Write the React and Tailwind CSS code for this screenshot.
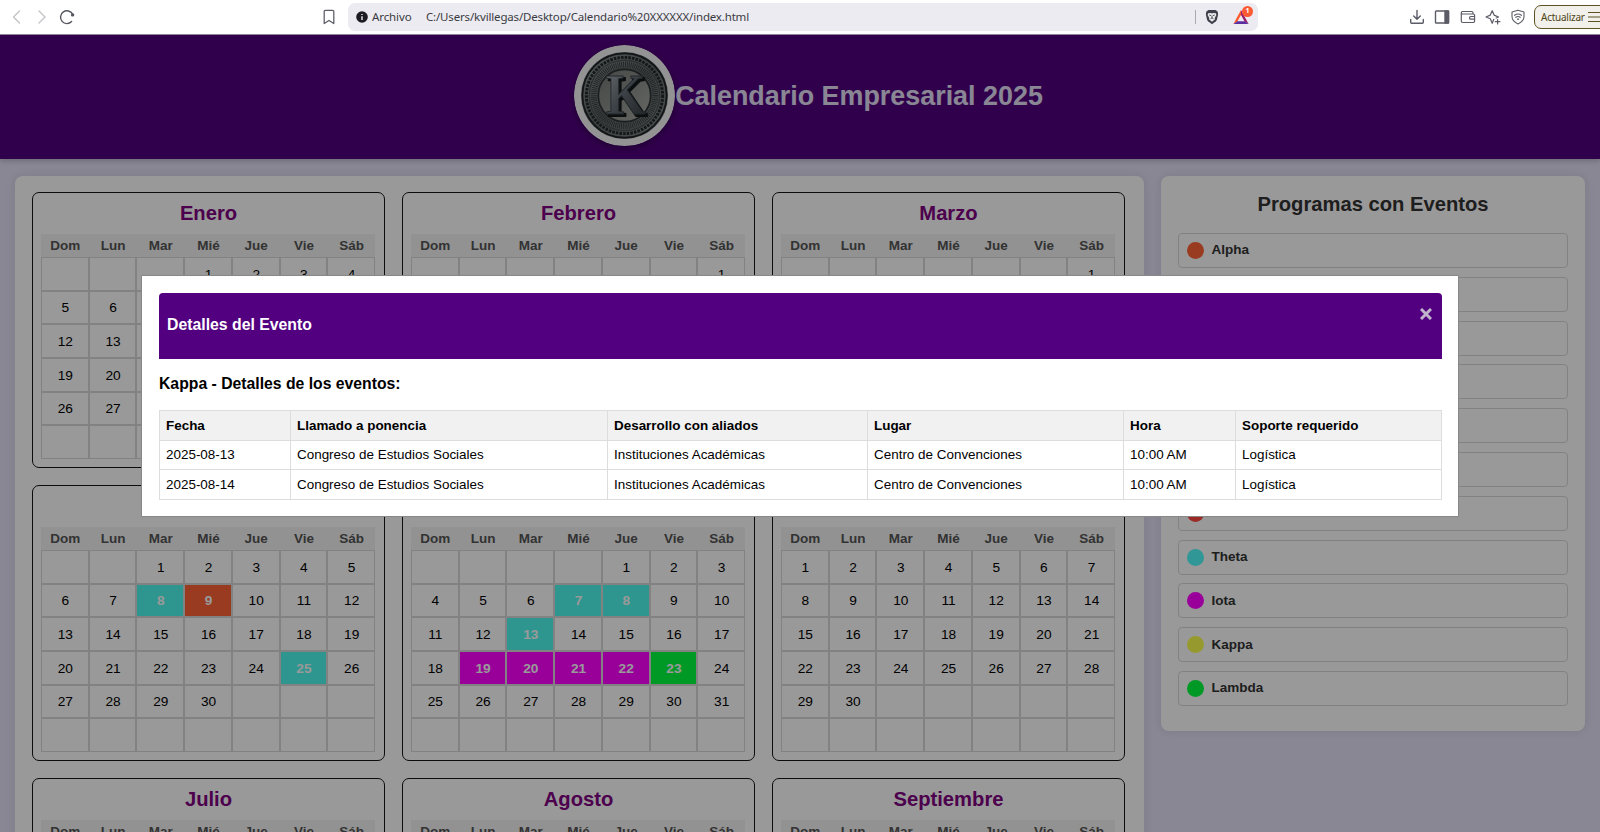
import React from "react";

const DAYS = ["Dom", "Lun", "Mar", "Mié", "Jue", "Vie", "Sáb"];

const TEAL = "bg-[#4dfbee] text-white font-bold";
const ORANGE = "bg-[#ff6338] text-white font-bold";
const MAGENTA = "bg-[#ff00ff] text-white font-bold";
const GREEN = "bg-[#00ff40] text-white font-bold";

const MONTHS = [
  { name: "Enero", start: 3, days: 31, events: {} },
  { name: "Febrero", start: 6, days: 28, events: {} },
  { name: "Marzo", start: 6, days: 31, events: {} },
  { name: "Abril", start: 2, days: 30, events: { 8: TEAL, 9: ORANGE, 25: TEAL } },
  {
    name: "Mayo",
    start: 4,
    days: 31,
    events: { 7: TEAL, 8: TEAL, 13: TEAL, 19: MAGENTA, 20: MAGENTA, 21: MAGENTA, 22: MAGENTA, 23: GREEN },
  },
  { name: "Junio", start: 0, days: 30, events: {} },
  { name: "Julio", start: 2, days: 31, events: {} },
  { name: "Agosto", start: 5, days: 31, events: {} },
  { name: "Septiembre", start: 1, days: 30, events: {} },
];

const PROGRAMS = [
  ["Alpha", "bg-[#ff6338]"],
  ["Beta", "bg-[#3b82f6]"],
  ["Gamma", "bg-[#22c55e]"],
  ["Delta", "bg-[#f59e0b]"],
  ["Epsilon", "bg-[#8b5cf6]"],
  ["Zeta", "bg-[#ec4899]"],
  ["Eta", "bg-[#ff4640]"],
  ["Theta", "bg-[#50fbfb]"],
  ["Iota", "bg-[#ff00ff]"],
  ["Kappa", "bg-[#fbff4b]"],
  ["Lambda", "bg-[#00ff40]"],
];

const HEADERS = ["Fecha", "Llamado a ponencia", "Desarrollo con aliados", "Lugar", "Hora", "Soporte requerido"];
const ROWS = [
  ["2025-08-13", "Congreso de Estudios Sociales", "Instituciones Académicas", "Centro de Convenciones", "10:00 AM", "Logística"],
  ["2025-08-14", "Congreso de Estudios Sociales", "Instituciones Académicas", "Centro de Convenciones", "10:00 AM", "Logística"],
];

function Toolbar() {
  const line = { fill: "none", stroke: "#5b5c66", strokeWidth: 1.4, strokeLinecap: "round", strokeLinejoin: "round" };
  return (
    <div className="flex h-[35px] shrink-0 items-center overflow-hidden border-b border-[#8d8798] bg-white font-['Noto_Sans',sans-serif] text-[11.5px] text-[#3a3b42]">
      <svg className="ml-[11px] h-4 w-[12px] shrink-0" viewBox="0 0 12 16" {...line} stroke="#c3c3c8">
        <path d="M8.5 2 2.5 8l6 6" />
      </svg>
      <svg className="ml-[13px] h-4 w-[12px] shrink-0" viewBox="0 0 12 16" {...line} stroke="#c3c3c8">
        <path d="M3 2l6 6-6 6" />
      </svg>
      <svg className="ml-[11px] h-4 w-4 shrink-0" viewBox="0 0 16 16" {...line} stroke="#55565e">
        <path d="M12.6 12.6A6.4 6.4 0 1 1 13.6 5.2" />
        <circle cx="13.6" cy="5.900" r="1.700" fill="#55565e" stroke="none" />
      </svg>
      <svg className="ml-[246px] h-4 w-4 shrink-0" viewBox="0 0 16 16" {...line} strokeWidth="1.250">
        <path d="M3.2 2.6q0-1.2 1.2-1.2h7.2q1.2 0 1.2 1.2v12L8 11.4l-4.8 3.2z" />
      </svg>
      <div className="ml-[11px] flex h-[28px] w-[910px] shrink-0 items-center rounded-[7px] bg-[#ecebf1]">
        <svg className="ml-[8px] h-[12px] w-[12px] shrink-0" viewBox="0 0 12 12">
          <circle cx="6" cy="6" r="5.8" fill="#1c1c22" />
          <path d="M6 5.3v3.6M6 3v1.1" stroke="#fff" strokeWidth="1.3" />
        </svg>
        <span className="ml-[4px] w-[54px] shrink-0 whitespace-nowrap tracking-[-0.1px]">Archivo</span>
        <span className="flex-1 whitespace-nowrap tracking-[-0.17px]">C:/Users/kvillegas/Desktop/Calendario%20XXXXXX/index.html</span>
        <span className="h-[14px] w-px bg-[#a9a9b2]" />
        <svg className="ml-[9px] h-4 w-[14px] shrink-0" viewBox="0 0 14 16">
          <path d="M3.4.9h7.2l2.2 1.9.3 3-1.1 4.8q-.3 1.2-1.3 2L7 15.2l-3.700-2.600q-1-.8-1.300-2L.9 5.800l.3-3z" fill="#3f404b" />
          <path d="M3.200 4.200 5.800 4 7 4.400 8.200 4l2.600.200.600 1.700L9.700 9l.3 1.300L7 12.800l-3-2.500L4.300 9 2.600 5.900z" fill="#e9e9ee" />
          <path d="M4.300 6l1.700.700M9.700 6 8 6.700M7 6.500v2.500M5.600 9.700 7 9l1.400.700" stroke="#3f404b" strokeWidth=".9" fill="none" />
        </svg>
        <div className="relative ml-[14px] h-[16px] w-[18px] shrink-0">
          <svg className="h-4 w-4" viewBox="0 0 16 16">
            <path d="M8 1 .4 15l4-2.500L8 6z" fill="#ff5a2c" />
            <path d="M8 1l7.600 14-4-2.500L8 6z" fill="#9a1f6a" />
            <path d="M.4 15h15.200l-4-2.700H4.400z" fill="#5b2fa0" />
          </svg>
          <span className="absolute -top-[3px] left-[9px] flex h-[11px] w-[11px] items-center justify-center rounded-full bg-[#fb5a32] text-[7px] font-bold text-white">1</span>
        </div>
        <span className="w-[7px]" />
      </div>
      <svg className="ml-[151px] h-4 w-4 shrink-0" viewBox="0 0 16 16" {...line}>
        <path d="M8 1.500v8.500M4.700 7 8 10.300 11.300 7M1.700 10.500v2.800q0 .9.900.9h10.800q.9 0 .9-.9v-2.800" />
      </svg>
      <svg className="ml-[9px] h-4 w-4 shrink-0" viewBox="0 0 16 16" {...line}>
        <rect x="1.500" y="2" width="13" height="12" rx=".8" />
        <path d="M11 2h3.500v12H11z" fill="#5b5c66" />
      </svg>
      <svg className="ml-[10px] h-4 w-4 shrink-0" viewBox="0 0 16 16" {...line} strokeWidth="1.200">
        <path d="M13 5V3.800q0-1.300-1.300-1.300H2.500Q1.300 2.500 1.300 3.700V12q0 1.500 1.500 1.500h10.400q1.400 0 1.400-1.400V6.400Q14.600 5 13.200 5H2.400Q1.300 5 1.300 3.800M14.600 7.500h-4q-1 0-1 1v.7q0 1 1 1h4" />
      </svg>
      <svg className="ml-[9px] h-4 w-4 shrink-0" viewBox="0 0 16 16" {...line} strokeWidth="1.200">
        <path d="M8.800 10.300 7.200 14.300 5.300 9.800 1 8l4.300-1.900L7.200 1.700l1.900 4.400L13.500 8l-2.300 1M12.600 10.500v4.500M10.300 12.700h4.600" />
      </svg>
      <svg className="ml-[9px] h-4 w-4 shrink-0" viewBox="0 0 16 16" {...line} strokeWidth="1.100">
        <path d="M8 1.200 14 3v4.600q0 4.600-6 7.400-6-2.800-6-7.400V3z" />
        <path d="M4.600 6.300q3.400-2.600 6.800 0M5.800 8.300q2.200-1.700 4.400 0" />
        <circle cx="8" cy="10.200" r=".9" fill="#5b5c66" stroke="none" />
      </svg>
      <div className="ml-[8px] flex h-[24px] w-[80px] shrink-0 items-center rounded-l-[7px] border border-[#5f5324] bg-[#f1f0ea] text-[10px] text-[#4f4417]">
        <span className="ml-[6px] w-[47px] tracking-[-0.25px]">Actualizar</span>
        <svg className="h-[12px] w-[16px]" viewBox="0 0 16 12" stroke="#5f5324" strokeWidth="1.200">
          <path d="M0 1.500h16M0 6h16M0 10.500h16" />
        </svg>
      </div>
    </div>
  );
}

function Medal() {
  return (
    <svg className="h-[101px] w-[101px] shrink-0 rounded-full shadow-[0_2px_6px_rgba(0,0,0,0.4)]" viewBox="0 0 102 102">
      <defs>
        <linearGradient id="rim" x1="0" y1="0" x2="1" y2="1">
          <stop offset="0" stopColor="#8d9496" />
          <stop offset="0.5" stopColor="#62696a" />
          <stop offset="1" stopColor="#868b8a" />
        </linearGradient>
        <linearGradient id="face" x1="0" y1="0" x2="1" y2="1">
          <stop offset="0" stopColor="#737875" />
          <stop offset="1" stopColor="#a9aca5" />
        </linearGradient>
        <linearGradient id="letter" x1="0" y1="0" x2="1" y2="1">
          <stop offset="0" stopColor="#b4babf" />
          <stop offset="0.45" stopColor="#666f78" />
          <stop offset="1" stopColor="#30373b" />
        </linearGradient>
      </defs>
      <circle cx="51" cy="51" r="51" fill="#f6f6f6" />
      <circle cx="51" cy="51" r="44" fill="url(#rim)" />
      <circle cx="51" cy="51" r="42.500" fill="none" stroke="#1d2426" strokeWidth="1.800" />
      <circle cx="51" cy="51" r="38.500" fill="none" stroke="#23292a" strokeWidth="3" strokeDasharray="2.600 1.100" />
      <circle cx="51" cy="51" r="35.500" fill="none" stroke="#4a5050" strokeWidth="1.500" />
      <circle cx="51" cy="51" r="31" fill="none" stroke="#3b4142" strokeWidth="6" strokeDasharray="1 0.900" />
      <circle cx="51" cy="51" r="26.500" fill="url(#face)" stroke="#2f3535" strokeWidth="1.800" />
      <g fontFamily="Liberation Serif, serif" fontWeight="bold" fontSize="57" textAnchor="middle">
        <text x="54" y="71.500" textLength="40" lengthAdjust="spacingAndGlyphs" fill="#14181a" stroke="#14181a" strokeWidth="2">K</text>
        <text x="52" y="70" textLength="40" lengthAdjust="spacingAndGlyphs" fill="url(#letter)" stroke="#3b4349" strokeWidth="1">K</text>
      </g>
    </svg>
  );
}

function Month({ month }) {
  const cells = Array.from({ length: 42 }, (_, i) => {
    const d = i - month.start + 1;
    return d >= 1 && d <= month.days ? d : null;
  });
  return (
    <section className="h-[276px] rounded-[7px] border border-[#151515] pt-[9px] pr-[9px] pl-[8px]">
      <h2 className="h-[32px] pl-px text-center text-[20.200px] leading-[23px] font-bold text-[#800080]">{month.name}</h2>
      <div className="grid h-[23px] grid-cols-7 bg-[#f4f4f4] text-center text-[13.500px] leading-[23px] font-bold text-[#555]">
        {DAYS.map((d) => (
          <span key={d} className="pl-px">{d}</span>
        ))}
      </div>
      <div className="grid h-[202px] grid-cols-7 grid-rows-6">
        {cells.map((d, i) => (
          <div key={i} className={`flex items-center justify-center border border-[#d9d9d9] pt-[2px] pl-px text-[13.700px] leading-[20px] ${(d && month.events[d]) || "text-black"}`}>
            {d}
          </div>
        ))}
      </div>
    </section>
  );
}

function Modal() {
  return (
    <div className="absolute inset-0 flex items-start bg-black/40 pt-[240px] pl-[141px]">
      <div className="h-[242px] w-[1318px] border border-[#888] bg-white pt-[17px] pr-4 pl-[17px] text-black">
        <div className="flex h-[66px] items-start justify-between rounded-t-[4px] bg-[#520080] px-2 text-white">
          <h2 className="pt-[22px] text-[15.800px] leading-[20px] font-bold">Detalles del Evento</h2>
          <svg className="mt-[15px] mr-[2px] h-[12px] w-[12px]" viewBox="0 0 12 12" stroke="#c0b3cc" strokeWidth="3">
            <path d="M1 1l10 10M11 1 1 11" />
          </svg>
        </div>
        <h3 className="pt-[15px] text-[15.750px] leading-[20px] font-bold">Kappa - Detalles de los eventos:</h3>
        <table className="mt-[16px] w-full table-fixed border-collapse text-left text-[13.450px] leading-[20px]">
          <colgroup>
            <col className="w-[131px]" />
            <col className="w-[317px]" />
            <col className="w-[260px]" />
            <col className="w-[256px]" />
            <col className="w-[112px]" />
            <col />
          </colgroup>
          <thead>
            <tr className="h-[29.500px] bg-[#f1f1f1]">
              {HEADERS.map((h) => (
                <th key={h} className="border border-[#ddd] px-[6px] pt-px pb-0 font-bold">{h}</th>
              ))}
            </tr>
          </thead>
          <tbody>
            {ROWS.map((r) => (
              <tr key={r[0]} className="h-[29.500px]">
                {r.map((c) => (
                  <td key={c} className="border border-[#ddd] px-[6px] pt-px pb-0">{c}</td>
                ))}
              </tr>
            ))}
          </tbody>
        </table>
      </div>
    </div>
  );
}

export default function App() {
  return (
    <div className="flex h-[832px] w-[1600px] flex-col overflow-hidden font-['Liberation_Sans',Arial,sans-serif]">
      <Toolbar />
      <div className="relative h-[797px] overflow-hidden bg-[#e6e1f8]">
        <header className="flex h-[124px] items-center justify-center bg-[#520080] pb-[3px] pl-[17px] shadow-[0_2px_5px_rgba(0,0,0,0.2)]">
          <Medal />
          <h1 className="text-[26.900px] leading-[32px] font-bold text-[#e6e1f8]">Calendario Empresarial 2025</h1>
        </header>
        <main className="flex items-start gap-[17px] px-[15px] pt-[17px]">
          <div className="grid w-[1129px] grid-cols-[353px_353px_353px] gap-[17px] rounded-[8px] bg-white pt-[16px] pb-[17px] pl-[17px] shadow-[0_0_10px_rgba(0,0,0,0.1)]">
            {MONTHS.map((m) => (
              <Month key={m.name} month={m} />
            ))}
          </div>
          <aside className="h-[555px] flex-1 rounded-[8px] bg-white px-[17px] pt-[17px] shadow-[0_0_10px_rgba(0,0,0,0.1)]">
            <h2 className="h-[40px] text-center text-[20.200px] leading-[23px] font-bold text-[#333]">Programas con Eventos</h2>
            <ul className="flex flex-col gap-[8.800px]">
              {PROGRAMS.map(([name, color]) => (
                <li key={name} className="flex h-[35px] items-center gap-[7.500px] rounded-[4px] border border-[#d9d9d9] px-[8px] text-[13.500px] font-bold text-[#333]">
                  <span className={`h-[17px] w-[17px] rounded-full ${color}`} />
                  {name}
                </li>
              ))}
            </ul>
          </aside>
        </main>
        <Modal />
      </div>
    </div>
  );
}
